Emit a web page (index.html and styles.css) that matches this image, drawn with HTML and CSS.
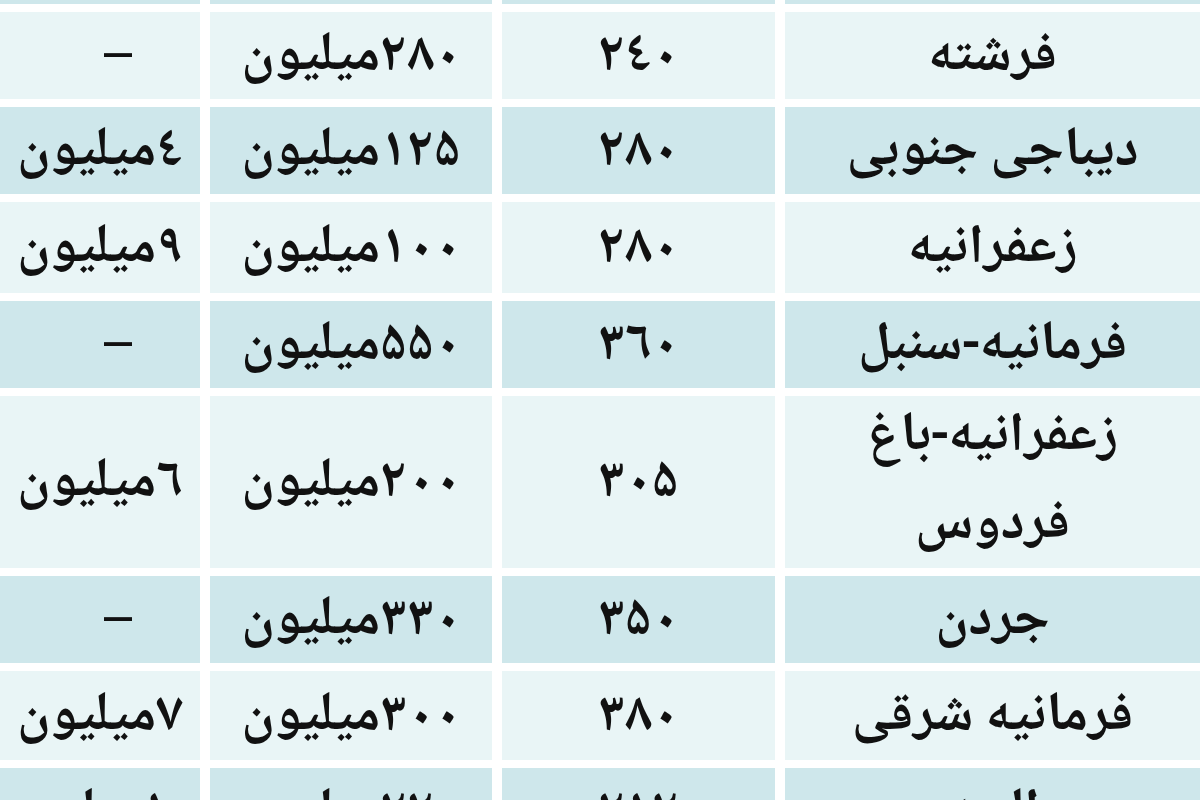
FILE: index.html
```html
<!DOCTYPE html>
<html lang="fa" dir="rtl">
<head>
<meta charset="utf-8">
<title>جدول قیمت</title>
<link rel="stylesheet" href="styles.css">
</head>
<body>
<div class="table">
  <div class="cell blue top"></div><div class="cell blue top"></div><div class="cell blue top"></div><div class="cell blue top"></div>

  <div class="cell light name">فرشته</div>
  <div class="cell light num">۲٤۰</div>
  <div class="cell light price">۲۸۰میلیون</div>
  <div class="cell light rent"><span class="dash">–</span></div>

  <div class="cell blue name">دیباجی جنوبی</div>
  <div class="cell blue num">۲۸۰</div>
  <div class="cell blue price">۱۲۵میلیون</div>
  <div class="cell blue rent">٤میلیون</div>

  <div class="cell light name">زعفرانیه</div>
  <div class="cell light num">۲۸۰</div>
  <div class="cell light price">۱۰۰میلیون</div>
  <div class="cell light rent">۹میلیون</div>

  <div class="cell blue name">فرمانیه-سنبل</div>
  <div class="cell blue num">۳٦۰</div>
  <div class="cell blue price">۵۵۰میلیون</div>
  <div class="cell blue rent"><span class="dash">–</span></div>

  <div class="cell light name wrap">زعفرانیه-باغ<br>فردوس</div>
  <div class="cell light num">۳۰۵</div>
  <div class="cell light price">۲۰۰میلیون</div>
  <div class="cell light rent">٦میلیون</div>

  <div class="cell blue name">جردن</div>
  <div class="cell blue num">۳۵۰</div>
  <div class="cell blue price">۳۳۰میلیون</div>
  <div class="cell blue rent"><span class="dash">–</span></div>

  <div class="cell light name">فرمانیه شرقی</div>
  <div class="cell light num">۳۸۰</div>
  <div class="cell light price">۳۰۰میلیون</div>
  <div class="cell light rent">۷میلیون</div>

  <div class="cell blue name">الهیه</div>
  <div class="cell blue num">۲۱۲</div>
  <div class="cell blue price">۲۲۰میلیون</div>
  <div class="cell blue rent">۱۰میلیون</div>
</div>
</body>
</html>
```
FILE: styles.css
```css
html, body {
  margin: 0;
  padding: 0;
  background: #ffffff;
  overflow: hidden;
}
body {
  width: 1200px;
  height: 800px;
  font-family: "Noto Naskh Arabic", "Noto Sans Arabic", "DejaVu Sans", sans-serif;
  font-weight: bold;
  color: #111111;
}
.table {
  direction: rtl;
  display: grid;
  grid-template-columns: 415px 273px 282px 200px;
  grid-template-rows: 4px 87px 87px 91px 87px 172px 87px 89px 87px;
  column-gap: 10px;
  row-gap: 8px;
}
.cell {
  display: flex;
  align-items: center;
  justify-content: center;
  text-align: center;
  font-size: 55px;
  line-height: 1;
  white-space: nowrap;
  padding-top: 5px;
  box-sizing: border-box;
}
.top { padding-top: 0; }
.light { background: #e9f5f6; }
.blue { background: #cee7eb; }
.wrap { line-height: 88px; white-space: normal; padding-top: 0; }
.dash {
  font-size: 55px;
  padding-left: 36px;
}
```
